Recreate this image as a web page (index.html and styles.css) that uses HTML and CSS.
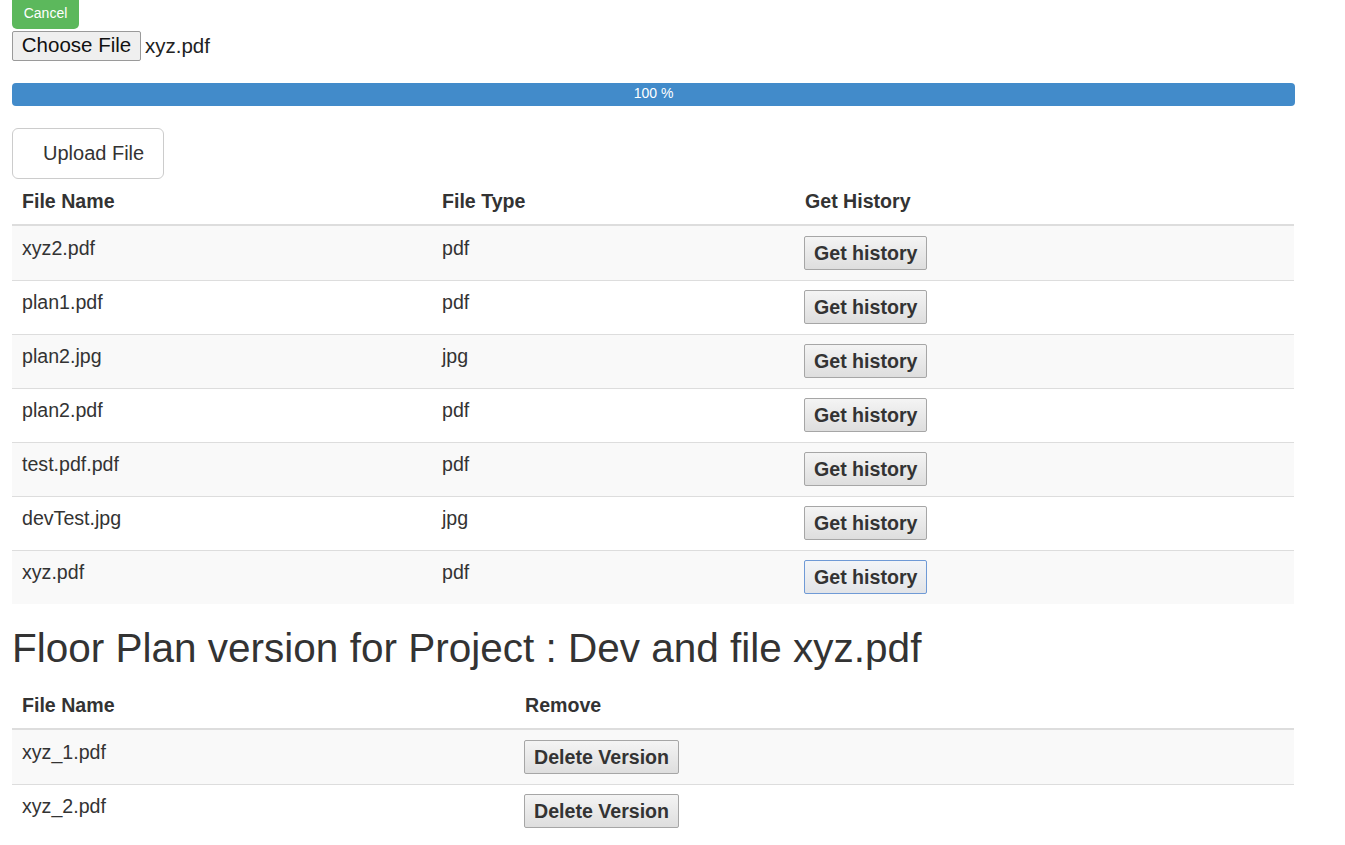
FILE: index.html
```html
<!DOCTYPE html>
<html>
<head>
<meta charset="utf-8">
<title>Floor Plan</title>
<link rel="stylesheet" href="styles.css">
</head>
<body>
<div class="page">
  <button class="btn-cancel">Cancel</button>
  <div class="file-input">
    <span class="file-btn">Choose File</span>
    <span class="file-name">xyz.pdf</span>
  </div>
  <div class="progress"><div class="progress-bar" style="width:100%">100 %</div></div>
  <button class="btn-upload">Upload File</button>

  <table class="table t1">
    <colgroup><col class="c1"><col class="c2"><col></colgroup>
    <thead>
      <tr><th>File Name</th><th>File Type</th><th>Get History</th></tr>
    </thead>
    <tbody>
      <tr><td>xyz2.pdf</td><td>pdf</td><td><button class="nbtn">Get history</button></td></tr>
      <tr><td>plan1.pdf</td><td>pdf</td><td><button class="nbtn">Get history</button></td></tr>
      <tr><td>plan2.jpg</td><td>jpg</td><td><button class="nbtn">Get history</button></td></tr>
      <tr><td>plan2.pdf</td><td>pdf</td><td><button class="nbtn">Get history</button></td></tr>
      <tr><td>test.pdf.pdf</td><td>pdf</td><td><button class="nbtn">Get history</button></td></tr>
      <tr><td>devTest.jpg</td><td>jpg</td><td><button class="nbtn">Get history</button></td></tr>
      <tr><td>xyz.pdf</td><td>pdf</td><td><button class="nbtn focused">Get history</button></td></tr>
    </tbody>
  </table>

  <h2 class="title">Floor Plan version for Project : Dev and file xyz.pdf</h2>

  <table class="table t2">
    <colgroup><col class="d1"><col></colgroup>
    <thead>
      <tr><th>File Name</th><th>Remove</th></tr>
    </thead>
    <tbody>
      <tr><td>xyz_1.pdf</td><td><button class="nbtn">Delete Version</button></td></tr>
      <tr><td>xyz_2.pdf</td><td><button class="nbtn">Delete Version</button></td></tr>
    </tbody>
  </table>
</div>
</body>
</html>
```

FILE: styles.css
```css
html, body {
  margin: 0;
  padding: 0;
  background: #fff;
}
body {
  font-family: "Liberation Sans", Arial, sans-serif;
  font-size: 19.6px;
  line-height: 25px;
  color: #333;
}
.page {
  width: 1282px;
  margin-left: 12px;
}
.btn-cancel {
  display: block;
  height: 29px;
  width: 67px;
  padding: 0;
  border: 0;
  border-radius: 0 0 5px 5px;
  background: #5cb85c;
  color: #fff;
  font-family: "Liberation Sans", Arial, sans-serif;
  font-size: 14px;
  line-height: 20px;
  padding-bottom: 4px;
  text-align: center;
}
.file-input {
  display: flex;
  align-items: center;
  margin-top: 2px;
  height: 30px;
}
.file-btn {
  box-sizing: border-box;
  height: 30px;
  width: 129px;
  border: 1px solid #9a9a9a;
  border-radius: 2px;
  background: #efefef;
  color: #111;
  font-size: 20.5px;
  line-height: 26px;
  text-align: center;
}
.file-name {
  margin-left: 4px;
  font-size: 20.5px;
  line-height: 26px;
  color: #222;
}
.progress {
  margin-top: 22px;
  height: 23px;
  width: 1283px;
  border-radius: 4px;
  background: #f5f5f5;
  overflow: hidden;
}
.progress-bar {
  height: 23px;
  background: #428bca;
  color: #fff;
  font-size: 14px;
  line-height: 21px;
  text-align: center;
}
.btn-upload {
  display: block;
  margin-top: 22px;
  box-sizing: border-box;
  height: 51px;
  width: 152px;
  padding: 0 18px 0 30px;
  border: 1px solid #ccc;
  border-radius: 6px;
  background: #fff;
  color: #333;
  font-family: "Liberation Sans", Arial, sans-serif;
  font-size: 20px;
  line-height: 47px;
  text-align: left;
}
.table {
  width: 1282px;
  border-collapse: separate;
  border-spacing: 0;
  table-layout: fixed;
}
.t1 .c1 { width: 420px; }
.t1 .c2 { width: 363px; }
.t2 .d1 { width: 503px; }
.table th {
  text-align: left;
  font-weight: bold;
  padding: 10px;
  line-height: 25px;
  border-bottom: 2px solid #ddd;
}
.table td {
  vertical-align: top;
  padding: 9px 10px 10px;
  line-height: 25px;
  border-top: 1px solid #ddd;
}
.table tbody tr:first-child td {
  border-top: 0;
  padding-top: 10px;
}
.table tbody tr:nth-child(odd) td {
  background: #f9f9f9;
}
.nbtn {
  box-sizing: border-box;
  height: 34px;
  margin-left: -1px;
  padding: 0 9px;
  vertical-align: top;
  border: 1px solid #a6a6a6;
  border-radius: 2px;
  background: linear-gradient(#f4f4f4, #dedede);
  color: #333;
  font-family: "Liberation Sans", Arial, sans-serif;
  font-size: 19.6px;
  font-weight: bold;
  line-height: 30px;
}
.nbtn.focused {
  border-color: #6f9ad6;
  background: linear-gradient(#f3f5f8, #e2e4e8);
}
.title {
  margin: 21px 0 12px;
  font-size: 40.5px;
  line-height: 46px;
  font-weight: normal;
  color: #333;
}
```
